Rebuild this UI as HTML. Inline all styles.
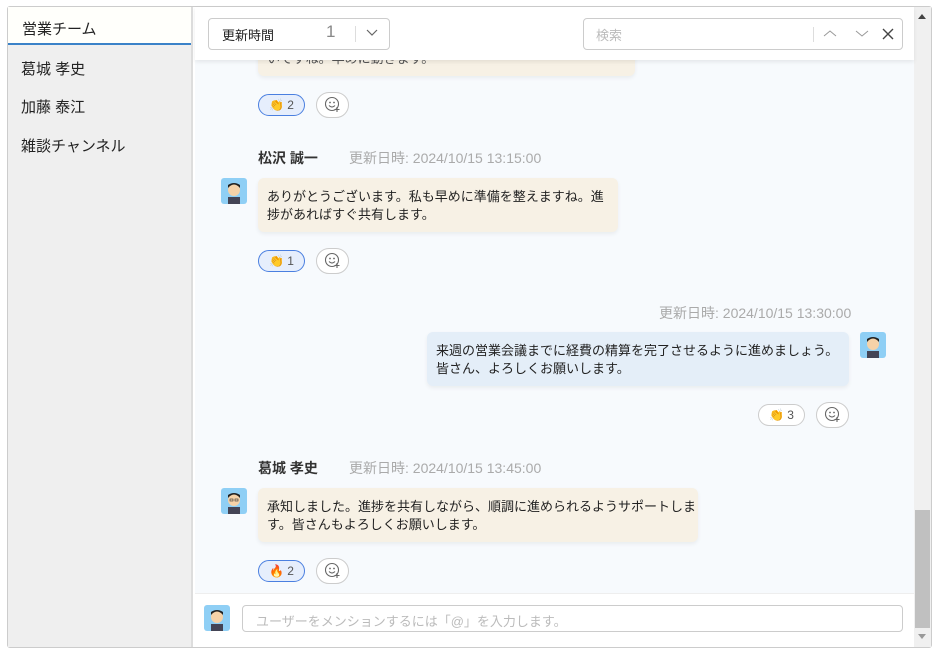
<!DOCTYPE html><html><head><meta charset="utf-8"><style>
*{box-sizing:border-box;margin:0;padding:0}
body{width:940px;height:656px;background:#fff;font-family:"Liberation Sans","Noto Sans CJK JP",sans-serif;position:relative;overflow:hidden;color:#333}
.a{position:absolute}
.frame{left:7px;top:6px;width:925px;height:642px;border:1px solid #ccc;border-radius:3px;background:#fff}
.side{left:8px;top:7px;width:185px;height:640px;background:#efefef;border-right:2px solid #ddd}
.ch{position:absolute;left:21px;font-size:15px;color:#222}
.main{left:195px;top:7px;width:719px;height:586px;background:#f7fafd}
.hdr{left:195px;top:7px;width:719px;height:53px;background:#fff;box-shadow:0 2px 4px rgba(0,0,0,.08)}
.box{border:1px solid #ccc;border-radius:4px;background:#fff}
.bub{position:absolute;background:#f7f1e5;border-radius:6px;font-size:13px;line-height:18px;padding:10px 5px 8px 9px;color:#222;box-shadow:0 2px 4px rgba(0,0,0,.06)}
.blue{background:#e4eef8}
.name{position:absolute;font-size:14px;font-weight:bold;color:#333}
.ts{position:absolute;font-size:14px;color:#aaa}
.pill{position:absolute;height:22px;border-radius:11px;border:1px solid #4a7fe0;background:#e6eefc;font-size:12px;color:#555;line-height:20px;padding-left:10px}
.pill.g{border-color:#ccc;background:#fff}
.add{position:absolute;width:33px;height:26px;border-radius:13px;border:1px solid #ccc;background:#fff}
.av{position:absolute;width:26px;height:26px;border-radius:3px;background:#8fcff5;overflow:hidden}
</style></head><body>
<div class="a frame"></div>
<div class="a side"></div>
<div class="a" style="left:8px;top:7px;width:183px;height:38px;background:#fffffb;border-bottom:2px solid #3a82c8"></div>
<div class="ch" style="top:18px;left:22px">営業チーム</div>
<div class="ch" style="top:58px">葛城 孝史</div>
<div class="ch" style="top:96px">加藤 泰江</div>
<div class="ch" style="top:135px">雑談チャンネル</div>
<div class="a main"></div>
<div class="a" style="left:914px;top:7px;width:17px;height:640px;background:#f0f0f0"></div>
<div class="a" style="left:915px;top:510px;width:15px;height:118px;background:#c0c0c0"></div>
<div class="a" style="left:918px;top:14px;width:0;height:0;border-left:4px solid transparent;border-right:4px solid transparent;border-bottom:5px solid #444"></div>
<div class="a" style="left:918px;top:634px;width:0;height:0;border-left:4px solid transparent;border-right:4px solid transparent;border-top:5px solid #999"></div>

<div class="bub" style="left:258px;top:30px;width:377px;height:46px;padding-top:20px;color:#555">いですね。早めに動きます。</div>
<div class="a hdr"></div>
<div class="a box" style="left:208px;top:18px;width:182px;height:32px"></div>
<div class="a" style="left:222px;top:25px;font-size:13px;color:#222">更新時間</div>
<div class="a" style="left:326px;top:22px;font-size:17px;color:#888">1</div>
<div class="a" style="left:355px;top:26px;width:1px;height:16px;background:#ddd"></div>
<svg class="a" style="left:366px;top:29px" width="12" height="8"><path d="M1 1l5 5 5-5" fill="none" stroke="#666" stroke-width="1.2"/></svg>
<div class="a box" style="left:583px;top:18px;width:320px;height:32px"></div>
<div class="a" style="left:596px;top:25px;font-size:13px;color:#bbb">検索</div>
<div class="a" style="left:813px;top:27px;width:1px;height:15px;background:#ddd"></div>
<svg class="a" style="left:823px;top:29px" width="14" height="9"><path d="M1 7l6-5 6 5" fill="none" stroke="#999" stroke-width="1"/></svg>
<svg class="a" style="left:855px;top:29px" width="14" height="9"><path d="M1 2l6 5 6-5" fill="none" stroke="#999" stroke-width="1"/></svg>
<svg class="a" style="left:882px;top:28px" width="12" height="12"><path d="M1 1l10 10M11 1L1 11" stroke="#444" stroke-width="1.4"/></svg>

<div class="pill" style="left:258px;top:94px;width:47px">👏 2</div>
<div class="add" style="left:316px;top:92px"></div>

<div class="name" style="left:258px;top:148px">松沢 誠一</div>
<div class="ts" style="left:349px;top:148px">更新日時: 2024/10/15 13:15:00</div>
<div class="av" style="left:221px;top:178px"><svg width="26" height="26"><rect x="7" y="19" width="12" height="7" fill="#445"/><circle cx="13" cy="12" r="6" fill="#f6d2a8"/><path d="M7 10q6-7 12 0v-3q-6-4-12 0z" fill="#222"/></svg></div>
<div class="bub" style="left:258px;top:178px;width:360px;height:54px">ありがとうございます。私も早めに準備を整えますね。進捗があればすぐ共有します。</div>
<div class="pill" style="left:258px;top:250px;width:47px">👏 1</div>
<div class="add" style="left:316px;top:248px"></div>

<div class="ts" style="left:659px;top:303px">更新日時: 2024/10/15 13:30:00</div>
<div class="bub blue" style="left:427px;top:332px;width:422px;height:54px">来週の営業会議までに経費の精算を完了させるように進めましょう。皆さん、よろしくお願いします。</div>
<div class="av" style="left:860px;top:332px"><svg width="26" height="26"><rect x="7" y="19" width="12" height="7" fill="#445"/><circle cx="13" cy="12" r="6" fill="#f6d2a8"/><path d="M7 10q6-7 12 0v-3q-6-4-12 0z" fill="#222"/></svg></div>
<div class="pill g" style="left:758px;top:404px;width:47px">👏 3</div>
<div class="add" style="left:816px;top:402px"></div>

<div class="name" style="left:258px;top:458px">葛城 孝史</div>
<div class="ts" style="left:349px;top:458px">更新日時: 2024/10/15 13:45:00</div>
<div class="av" style="left:221px;top:488px"><svg width="26" height="26"><rect x="7" y="19" width="12" height="7" fill="#445"/><circle cx="13" cy="12" r="6" fill="#f6d2a8"/><path d="M7 10q6-7 12 0v-3q-6-4-12 0z" fill="#222"/><rect x="9" y="11" width="3" height="2" fill="none" stroke="#333" stroke-width=".6"/><rect x="14" y="11" width="3" height="2" fill="none" stroke="#333" stroke-width=".6"/></svg></div>
<div class="bub" style="left:258px;top:488px;width:440px;height:54px;padding-right:2px">承知しました。進捗を共有しながら、順調に進められるようサポートしま<br>す。皆さんもよろしくお願いします。</div>
<div class="pill" style="left:258px;top:560px;width:47px">🔥 2</div>
<div class="add" style="left:316px;top:558px"></div>

<div class="a" style="left:195px;top:593px;width:719px;height:54px;background:#fff;border-top:1px solid #eee"></div>
<div class="av" style="left:204px;top:605px"><svg width="26" height="26"><rect x="7" y="19" width="12" height="7" fill="#445"/><circle cx="13" cy="12" r="6" fill="#f6d2a8"/><path d="M7 10q6-7 12 0v-3q-6-4-12 0z" fill="#222"/></svg></div>
<div class="a box" style="left:242px;top:605px;width:661px;height:27px"></div>
<div class="a" style="left:256px;top:611px;font-size:13px;color:#bbb">ユーザーをメンションするには「@」を入力します。</div>
<svg width="0" height="0" style="position:absolute"><defs><g id="sm"><circle cx="8" cy="8" r="6.5" fill="none" stroke="#666" stroke-width="1.1"/><circle cx="6" cy="6.5" r=".9" fill="#666"/><circle cx="10" cy="6.5" r=".9" fill="#666"/><path d="M5 9.5q3 3 6 0" fill="none" stroke="#666" stroke-width="1.1"/><path d="M13 11v5M10.5 13.5h5" stroke="#666" stroke-width="1.1"/></g></defs></svg>
<svg class="a" style="left:324px;top:96px" width="18" height="18"><use href="#sm"/></svg>
<svg class="a" style="left:324px;top:252px" width="18" height="18"><use href="#sm"/></svg>
<svg class="a" style="left:824px;top:406px" width="18" height="18"><use href="#sm"/></svg>
<svg class="a" style="left:324px;top:562px" width="18" height="18"><use href="#sm"/></svg>
</body></html>
